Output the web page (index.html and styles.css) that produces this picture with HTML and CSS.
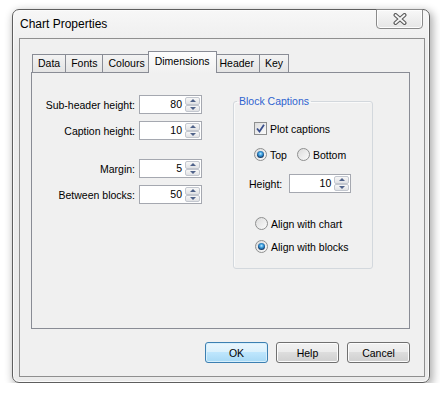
FILE: index.html
```html
<!DOCTYPE html>
<html lang="en">
  <head>
    <link rel="stylesheet" href="styles.css">
  </head>
  <body>
    <div class="window">
      <div class="titlebar">
        <span class="title">Chart Properties</span>
        <div class="close">
          <svg width="14" height="12" viewBox="0 0 14 12">
            <path d="M2.5 2 L11.5 10 M11.5 2 L2.5 10" stroke="#5a5a5a" stroke-width="4" stroke-linecap="round" fill="none" />
            <path d="M2.5 2 L11.5 10 M11.5 2 L2.5 10" stroke="#f6f6f6" stroke-width="1.8" stroke-linecap="round" fill="none" />
          </svg>
        </div>
      </div>

      <div class="client">
        <div class="tabs">
          <div class="tab">Data</div>
          <div class="tab">Fonts</div>
          <div class="tab">Colours</div>
          <div class="tab active">Dimensions</div>
          <div class="tab">Header</div>
          <div class="tab">Key</div>
        </div>

        <div class="panel">
          <div class="fields">
            <label>Sub-header height:</label>
            <div class="spin"><span class="val">80</span><span class="arrows"><i class="up"></i><i class="down"></i></span></div>
            <label>Caption height:</label>
            <div class="spin"><span class="val">10</span><span class="arrows"><i class="up"></i><i class="down"></i></span></div>
            <label class="gap">Margin:</label>
            <div class="spin gap"><span class="val">5</span><span class="arrows"><i class="up"></i><i class="down"></i></span></div>
            <label>Between blocks:</label>
            <div class="spin"><span class="val">50</span><span class="arrows"><i class="up"></i><i class="down"></i></span></div>
          </div>

          <fieldset class="group">
            <legend>Block Captions</legend>
            <div class="opt plot">
              <span class="checkbox">
                <svg width="9" height="9" viewBox="0 0 9 9">
                  <path d="M1 4.5 L3.5 7.5 L8 0.8" stroke="#3a4f8c" stroke-width="1.8" fill="none" />
                </svg>
              </span>
              Plot captions
            </div>
            <div class="opt place">
              <span class="radio on"></span><span class="place-label">Top</span>
              <span class="radio"></span>Bottom
            </div>
            <div class="height-row">
              <label>Height:</label>
              <div class="spin"><span class="val">10</span><span class="arrows"><i class="up"></i><i class="down"></i></span></div>
            </div>
            <div class="opt align-chart"><span class="radio"></span>Align with chart</div>
            <div class="opt align-blocks"><span class="radio on"></span>Align with blocks</div>
          </fieldset>
        </div>

        <div class="buttons">
          <button class="btn default">OK</button>
          <button class="btn">Help</button>
          <button class="btn">Cancel</button>
        </div>
      </div>
    </div>
  </body>
</html>
```

FILE: styles.css
```css
body {
  margin: 0;
  background: #fff;
  font: 10.5px "Liberation Sans", Arial, sans-serif;
  color: #000;
}

.window {
  margin: 9px 0 0 12px;
  width: 418px;
  height: 374px;
  box-sizing: border-box;
  border: 1px solid #5e5e5e;
  border-radius: 7px;
  background: linear-gradient(#f7f7f7, #ececec 40px, #ebebeb);
  box-shadow: 2px 3px 8px 1px rgba(0, 0, 0, 0.32), inset 0 0 0 1px #fbfbfb;
  display: flex;
  flex-direction: column;
}

.titlebar {
  display: flex;
  justify-content: space-between;
  height: 28px;
  padding-left: 7px;
}

.title {
  font-size: 12px;
  line-height: 28px;
}

.close {
  margin: -1px 6px 0 0;
  width: 47px;
  height: 20px;
  box-sizing: border-box;
  border: 1px solid #8a8a8a;
  border-radius: 0 0 4px 4px;
  background: linear-gradient(#f8f8f8, #e6e6e6);
  box-shadow: inset 0 0 0 1px #fdfdfd;
  display: flex;
  align-items: center;
  justify-content: center;
}

.client {
  margin: 0 4px 5px 6px;
  flex: 1;
  border: 1px solid #8f8f8f;
  background: #f0f0f0;
  padding: 12px 14px 13px 11px;
  display: flex;
  flex-direction: column;
}

/* tab strip */
.tabs {
  display: flex;
  align-items: flex-end;
  height: 21px;
  padding-left: 2px;
}

.tab {
  height: 18px;
  box-sizing: border-box;
  border: 1px solid #898c95;
  border-bottom: none;
  margin-left: -1px;
  padding: 0 5px;
  line-height: 17px;
  background: linear-gradient(#f3f3f3, #e4e4e4);
}

.tab.active {
  position: relative;
  z-index: 1;
  height: 22px;
  margin: 0 -2px -1px -3px;
  padding: 0 6px;
  line-height: 19px;
  background: linear-gradient(#fdfdfd, #f0f0f0);
}

.panel {
  height: 257px;
  box-sizing: border-box;
  border: 1px solid #898c95;
  padding-top: 22px;
  display: flex;
  align-items: flex-start;
}

/* left column */
.fields {
  display: grid;
  grid-template-columns: 103px 63px;
  column-gap: 4px;
  row-gap: 7px;
  align-items: center;
}

.fields label {
  text-align: right;
}

.fields .gap {
  margin-top: 12px;
}

.spin {
  width: 63px;
  height: 19px;
  box-sizing: border-box;
  border: 1px solid #a5a8b0;
  background: #fff;
  display: flex;
}

.spin .val {
  flex: 1;
  text-align: right;
  padding-right: 3px;
  line-height: 17px;
}

.spin .arrows {
  width: 15px;
  padding: 1px 1px 1px 0;
  display: flex;
  flex-direction: column;
}

.spin i {
  flex: 1;
  border: 1px solid #c3c7cf;
  border-radius: 2px;
  background: linear-gradient(#f7f7f7, #e1e2e5);
  display: flex;
  align-items: center;
  justify-content: center;
}

.spin i::after {
  content: "";
  border-left: 3px solid transparent;
  border-right: 3px solid transparent;
}

.spin i.up::after {
  border-bottom: 3px solid #50638a;
}

.spin i.down::after {
  border-top: 3px solid #50638a;
}

/* group box */
.group {
  margin: 0 0 0 31px;
  padding: 0;
  width: 140px;
  height: 174px;
  box-sizing: border-box;
  border: 1px solid #d3d8dd;
  border-radius: 3px;
  box-shadow: inset 1px 1px 0 #fafafa;
}

.group legend {
  margin-left: 3px;
  padding: 0 2px;
  color: #2f63cf;
}

.opt {
  display: flex;
  align-items: center;
  height: 13px;
}

.plot {
  margin: 15px 0 0 20px;
}

.place {
  margin: 13px 0 0 20px;
}

.place-label {
  margin-right: 10px;
}

.align-chart {
  margin: 24px 0 0 21px;
}

.align-blocks {
  margin: 10px 0 0 21px;
}

.checkbox,
.radio {
  width: 13px;
  height: 13px;
  box-sizing: border-box;
  border: 1px solid #8e8f8f;
  margin-right: 3px;
  background: linear-gradient(135deg, #dcdcdc, #fbfbfb);
  display: flex;
  align-items: center;
  justify-content: center;
}

.radio {
  border-radius: 50%;
}

.radio.on::after {
  content: "";
  width: 7px;
  height: 7px;
  border-radius: 50%;
  background: radial-gradient(circle at 50% 40%, #c6ecff 0, #45a6e3 1.6px, #1f69a8 3px, #1a3e68 3.5px);
}

.height-row {
  display: flex;
  align-items: center;
  gap: 7px;
  margin: 13px 0 0 15px;
}

.height-row .spin {
  width: 62px;
}

/* dialog buttons */
.buttons {
  display: flex;
  justify-content: flex-end;
  gap: 8px;
  margin-top: 13px;
}

.btn {
  width: 63px;
  height: 21px;
  padding: 0;
  border: 1px solid #707070;
  border-radius: 3px;
  font: inherit;
  color: #000;
  background: linear-gradient(#f2f2f2, #ebebeb 50%, #dddddd 50%, #cfcfcf);
  box-shadow: inset 0 0 0 1px #fcfcfc;
}

.btn.default {
  border-color: #3c7fb1;
  background: linear-gradient(#eaf6fd, #d9f0fc 50%, #bee6fd 50%, #a7d9f5);
  box-shadow: inset 0 0 0 1px #d6effc;
}
```
